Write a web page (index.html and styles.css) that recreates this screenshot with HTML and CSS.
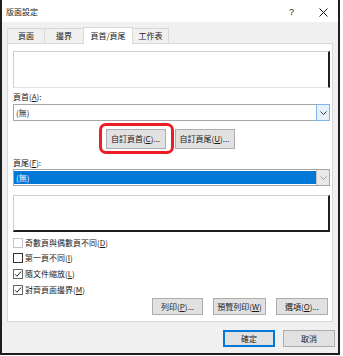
FILE: index.html
```html
<!DOCTYPE html>
<html lang="zh-Hant">
<head>
    <meta charset="UTF-8">
    <title>版面設定</title>
    <link rel="stylesheet" href="styles.css">
</head>
<body>
    <div class="dialog">
        <div class="titlebar">
            <span class="title">版面設定</span>
            <span class="help">?</span>
            <svg class="close" width="9" height="9" viewBox="0 0 9 9">
                <path d="M0.5 0.5 L8.5 8.5 M8.5 0.5 L0.5 8.5" stroke="#1a1a1a" stroke-width="1" fill="none"/>
            </svg>
        </div>

        <div class="content">
            <div class="tabs">
                <div class="tab" style="width:37px">頁面</div>
                <div class="tab" style="width:39px">邊界</div>
                <div class="tab active" style="width:50px">頁首/頁尾</div>
                <div class="tab" style="width:36px">工作表</div>
            </div>

            <div class="panel">
                <div class="preview"></div>

                <div class="label first">頁首(<u>A</u>):</div>
                <div class="select">
                    <span class="value">(無)</span>
                    <span class="arrow hot">
                        <svg width="7" height="4" viewBox="0 0 7 4"><path d="M0.5 0.5 L3.5 3.5 L6.5 0.5" stroke="#333" fill="none"/></svg>
                    </span>
                </div>

                <div class="custom-row">
                    <span class="marked">
                        <button class="btn custom">自訂頁首(<u>C</u>)...</button>
                    </span>
                    <button class="btn custom">自訂頁尾(<u>U</u>)...</button>
                </div>

                <div class="label">頁尾(<u>F</u>):</div>
                <div class="select">
                    <span class="value selected">(無)</span>
                    <span class="arrow">
                        <svg width="7" height="4" viewBox="0 0 7 4"><path d="M0.5 0.5 L3.5 3.5 L6.5 0.5" stroke="#9a9a9a" fill="none"/></svg>
                    </span>
                </div>

                <div class="preview lower"></div>

                <div class="checks">
                    <label class="check"><span class="box dim"></span>奇數頁與偶數頁不同(<u>D</u>)</label>
                    <label class="check"><span class="box"></span>第一頁不同(<u>I</u>)</label>
                    <label class="check"><span class="box on"><svg width="8" height="8" viewBox="0 0 8 8"><path d="M1 4.2 L3 6.2 L7 1.5" stroke="#222" fill="none"/></svg></span>隨文件縮放(<u>L</u>)</label>
                    <label class="check"><span class="box on"><svg width="8" height="8" viewBox="0 0 8 8"><path d="M1 4.2 L3 6.2 L7 1.5" stroke="#222" fill="none"/></svg></span>對齊頁面邊界(<u>M</u>)</label>
                </div>

                <div class="panel-buttons">
                    <button class="btn" style="width:51px">列印(<u>P</u>)...</button>
                    <button class="btn" style="width:53px">預覽列印(<u>W</u>)</button>
                    <button class="btn" style="width:52px">選項(<u>O</u>)...</button>
                </div>
            </div>

            <div class="dialog-buttons">
                <button class="btn default">確定</button>
                <button class="btn">取消</button>
            </div>
        </div>
    </div>
</body>
</html>
```

FILE: styles.css
```css
body {
    margin: 0;
    background-color: #ffffff;
    font-family: "Noto Sans CJK TC", "Liberation Sans", sans-serif;
    font-size: 8px;
    color: #1a1a1a;
}

.dialog {
    width: 340px;
    height: 355px;
    box-sizing: border-box;
    border: 2px solid #1e1e1e;
    border-top: none;
    background-color: #f0f0f0;
    display: flex;
    flex-direction: column;
}

/* title bar */
.titlebar {
    height: 22px;
    background-color: #ffffff;
    display: flex;
    align-items: center;
    padding: 0 0 0 4px;
}
.title {
    flex: 1;
    line-height: 12px;
    margin-top: 2px;
}
.help {
    font-family: "Liberation Sans", sans-serif;
    font-size: 9px;
    margin-right: 25px;
    margin-top: 2px;
}
.close {
    margin-right: 10px;
    margin-top: 2px;
}

.content {
    flex: 1;
    display: flex;
    flex-direction: column;
    padding: 5px 3px 0 5px;
}

/* tabs */
.tabs {
    display: flex;
    align-items: flex-end;
    height: 16px;
    padding-left: 0;
}
.tab {
    height: 15px;
    box-sizing: border-box;
    border: 1px solid #d9d9d9;
    border-bottom: none;
    border-right: none;
    background-color: #f0f0f0;
    display: flex;
    align-items: center;
    justify-content: center;
    line-height: 12px;
}
.tabs .tab:last-child {
    border-right: 1px solid #d9d9d9;
}
.tab.active {
    height: 17px;
    margin-bottom: -1px;
    background-color: #ffffff;
    border-right: 1px solid #d9d9d9;
    position: relative;
    z-index: 1;
}
.tab.active + .tab {
    border-left: none;
}

/* panel */
.panel {
    width: 326px;
    height: 279px;
    box-sizing: border-box;
    background-color: #ffffff;
    border: 1px solid #d9d9d9;
    padding: 0 2px 0 5px;
    display: flex;
    flex-direction: column;
}
.preview {
    margin-top: 7px;
    height: 37px;
    box-sizing: border-box;
    border: 1px solid #cfcfcf;
    border-right: 2px solid #1e1e1e;
    border-bottom: 1px solid #e3e3e3;
}
.preview.lower {
    margin-top: 9px;
    border-bottom: 2px solid #1e1e1e;
}

.label {
    line-height: 12px;
    height: 12px;
    margin-top: 8px;
}
.label.first {
    margin-top: 3px;
}
.first + .select {
    margin-top: 1px;
}

.select {
    height: 17px;
    box-sizing: border-box;
    border: 1px solid #a6a6a6;
    display: flex;
    align-items: stretch;
    background-color: #ffffff;
}
.value {
    flex: 1;
    display: flex;
    align-items: center;
    padding-left: 2px;
    line-height: 12px;
}
.value.selected {
    margin: 1px 0 1px 0;
    background-color: #0078d7;
    color: #ffffff;
}
.arrow {
    width: 12px;
    display: flex;
    align-items: center;
    justify-content: center;
    background-color: #e9e9e9;
    border-left: 1px solid #c4c4c4;
}
.arrow.hot {
    background-color: #e5f1fb;
    border: 1px solid #7eb4ea;
    margin: -1px -1px -1px 0;
}

/* buttons */
.btn {
    font-family: inherit;
    font-size: 8px;
    color: #1a1a1a;
    background-color: #e1e1e1;
    border: 1px solid #adadad;
    padding: 0;
    height: 17px;
    line-height: 12px;
    white-space: nowrap;
}
.custom-row {
    margin-top: 8px;
    display: flex;
    justify-content: center;
    gap: 9px;
    padding-right: 3px;
}
.btn.custom {
    width: 60px;
    height: 20px;
}
.marked {
    position: relative;
    display: flex;
}
.marked::after {
    content: "";
    position: absolute;
    left: -7px;
    right: -8px;
    top: -6px;
    bottom: -5px;
    border: 3px solid #ee1c24;
    border-radius: 7px;
}

.checks {
    margin-top: 3px;
    display: flex;
    flex-direction: column;
}
.check {
    height: 15.6px;
    display: flex;
    align-items: center;
    line-height: 12px;
}
.box {
    width: 10px;
    height: 10px;
    box-sizing: border-box;
    border: 1px solid #333333;
    margin-right: 2px;
    display: flex;
    align-items: center;
    justify-content: center;
    background-color: #ffffff;
}
.box.dim {
    border-color: #c6c6c6;
}
.box.on {
    border-color: #666666;
}

.panel-buttons {
    margin-top: 1px;
    display: flex;
    justify-content: flex-end;
    gap: 10px;
    padding-right: 2px;
}

.dialog-buttons {
    margin-top: 8px;
    display: flex;
    justify-content: flex-end;
    gap: 8px;
}
.dialog-buttons .btn {
    width: 52px;
}
.btn.default {
    border-color: #0078d7;
    box-shadow: inset 0 0 0 1px #0078d7;
}
```
